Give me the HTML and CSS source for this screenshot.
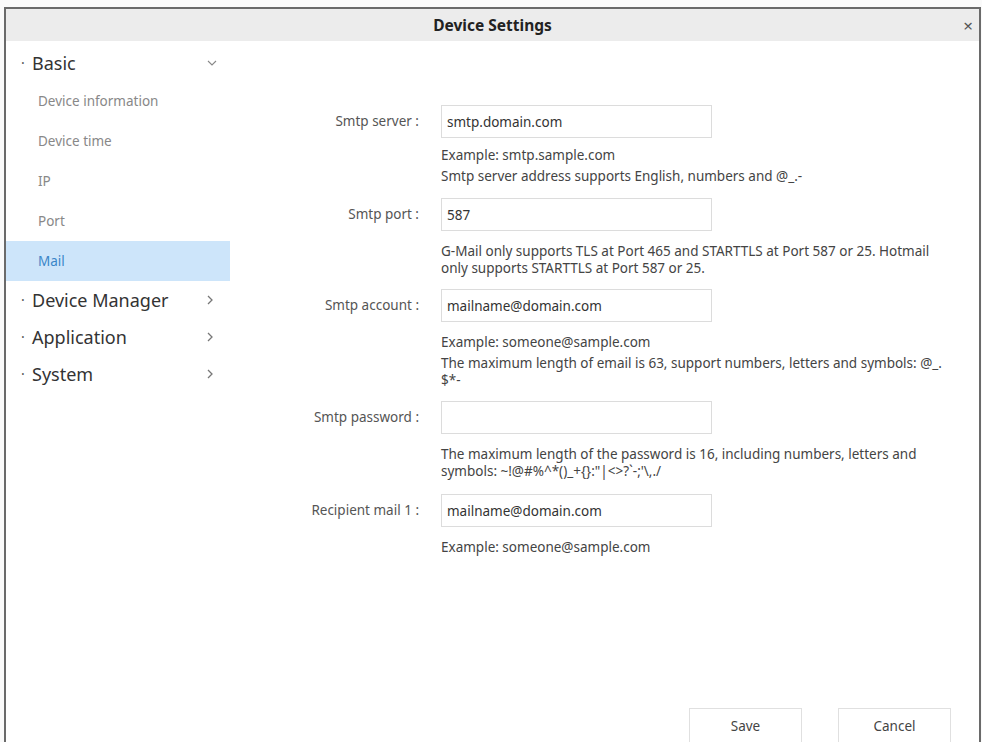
FILE: index.html
```html
<!DOCTYPE html>
<html lang="en">
<head>
	<meta charset="UTF-8">
	<meta name="viewport" content="width=device-width, initial-scale=1.0">
	<link rel="stylesheet" href="styles.css">
	<title>Device Settings</title>
</head>
<body>
	<div class="dialog">
		<div class="dialog-head">
			<span class="dialog-title">Device Settings</span>
			<span class="dialog-close">&times;</span>
		</div>
		<div class="dialog-body">
			<ul class="menu">
				<li class="menu-group">
					<span class="menu-dot">&middot;</span>Basic
					<svg class="chev" width="10" height="6" viewBox="0 0 10 6"><polyline points="1,1 5,5 9,1" fill="none" stroke="#888" stroke-width="1.1"/></svg>
				</li>
				<li class="menu-item">Device information</li>
				<li class="menu-item">Device time</li>
				<li class="menu-item">IP</li>
				<li class="menu-item">Port</li>
				<li class="menu-item active">Mail</li>
				<li class="menu-group">
					<span class="menu-dot">&middot;</span>Device Manager
					<svg class="chev" width="6" height="10" viewBox="0 0 6 10"><polyline points="1,1 5,5 1,9" fill="none" stroke="#777" stroke-width="1.3"/></svg>
				</li>
				<li class="menu-group">
					<span class="menu-dot">&middot;</span>Application
					<svg class="chev" width="6" height="10" viewBox="0 0 6 10"><polyline points="1,1 5,5 1,9" fill="none" stroke="#777" stroke-width="1.3"/></svg>
				</li>
				<li class="menu-group">
					<span class="menu-dot">&middot;</span>System
					<svg class="chev" width="6" height="10" viewBox="0 0 6 10"><polyline points="1,1 5,5 1,9" fill="none" stroke="#777" stroke-width="1.3"/></svg>
				</li>
			</ul>
			<div class="panel">
				<div class="form">
					<div class="field">
						<label class="field-label">Smtp server :</label>
						<div class="field-main">
							<input class="field-input" type="text" value="smtp.domain.com">
							<div class="hints hints-tight">
								<p>Example: smtp.sample.com</p>
								<p>Smtp server address supports English, numbers and @_.-</p>
							</div>
						</div>
					</div>
					<div class="field">
						<label class="field-label">Smtp port :</label>
						<div class="field-main">
							<input class="field-input" type="text" value="587">
							<div class="hints">
								<p>G-Mail only supports TLS at Port 465 and STARTTLS at Port 587 or 25. Hotmail only supports STARTTLS at Port 587 or 25.</p>
							</div>
						</div>
					</div>
					<div class="field">
						<label class="field-label">Smtp account :</label>
						<div class="field-main">
							<input class="field-input" type="text" value="mailname@domain.com">
							<div class="hints">
								<p>Example: someone@sample.com</p>
								<p>The maximum length of email is 63, support numbers, letters and symbols: @_.<br>$*-</p>
							</div>
						</div>
					</div>
					<div class="field">
						<label class="field-label">Smtp password :</label>
						<div class="field-main">
							<input class="field-input" type="password" value="">
							<div class="hints hints-loose">
								<p>The maximum length of the password is 16, including numbers, letters and symbols: ~!@#%^*()_+{}:"|&lt;&gt;?`-;'\,./</p>
							</div>
						</div>
					</div>
					<div class="field">
						<label class="field-label">Recipient mail 1 :</label>
						<div class="field-main">
							<input class="field-input" type="text" value="mailname@domain.com">
							<div class="hints">
								<p>Example: someone@sample.com</p>
							</div>
						</div>
					</div>
				</div>
				<div class="actions">
					<button class="btn" type="button">Save</button>
					<button class="btn" type="button">Cancel</button>
				</div>
			</div>
		</div>
	</div>
</body>
</html>
```

FILE: styles.css
```css
html,body{
	margin:0;
	height:100%;
	overflow:hidden;
}
body{
	background:#fafafa;
	font-family:"Noto Sans","Open Sans",sans-serif;
	color:#333;
}
.dialog{
	margin:7px 1px 0 4px;
	height:calc(100vh - 7px);
	border:2px solid #6a6a6a;
	border-bottom:none;
	background:#fff;
	display:flex;
	flex-direction:column;
	box-sizing:border-box;
}
.dialog-head{
	height:32px;
	background:#ececec;
	display:flex;
	align-items:center;
	justify-content:center;
	position:relative;
	flex:none;
}
.dialog-title{
	font-size:15.5px;
	font-weight:bold;
	color:#222;
}
.dialog-close{
	position:absolute;
	right:6px;
	top:8px;
	font-size:17px;
	line-height:18px;
	color:#555;
}
.dialog-body{
	flex:1;
	display:flex;
	min-height:0;
}

/* left menu */
.menu{
	list-style:none;
	margin:0;
	padding:3px 0 0;
	width:224px;
	flex:none;
}
.menu-group{
	height:37px;
	display:flex;
	align-items:center;
	font-size:18px;
	color:#333;
	padding-left:15px;
	position:relative;
}
.menu-dot{
	font-size:14px;
	color:#555;
	width:11px;
}
.chev{
	position:absolute;
	left:201px;
	top:50%;
	transform:translateY(-50%);
}
.menu-item{
	height:40px;
	display:flex;
	align-items:center;
	padding-left:32px;
	font-size:13.5px;
	color:#888;
}
.menu-item.active{
	background:#cde5fa;
	color:#3a86c8;
}

/* form panel */
.panel{
	flex:1;
	display:flex;
	flex-direction:column;
	min-width:0;
}
.form{
	flex:1;
	padding-top:64px;
}
.field{
	display:grid;
	grid-template-columns:189px 1fr;
	column-gap:22px;
}
.field-label{
	text-align:right;
	font-size:13.5px;
	color:#555;
	height:33px;
	line-height:33px;
	white-space:nowrap;
}
.field-input{
	width:271px;
	height:33px;
	box-sizing:border-box;
	border:1px solid #dcdcdc;
	padding:0 5px;
	font-family:inherit;
	font-size:13.5px;
	color:#333;
	outline-style:none;
}
.hints{
	margin:12px 0 12px;
	max-width:508px;
	font-size:13.5px;
	color:#444;
}
.hints-tight{
	margin:9px 0 13px;
}
.hints-loose{
	margin:12px 0 14px;
}
.hints p{
	margin:0 0 4px;
	line-height:17px;
}
.hints p:last-child{
	margin-bottom:0;
}

.actions{
	display:flex;
	justify-content:flex-end;
	gap:36px;
	padding:0 28px 0 0;
	flex:none;
}
.btn{
	width:113px;
	height:36px;
	background:#fff;
	border:1px solid #e0e0e0;
	font-family:inherit;
	font-size:13.5px;
	color:#444;
	margin-bottom:-2px;
}
```
